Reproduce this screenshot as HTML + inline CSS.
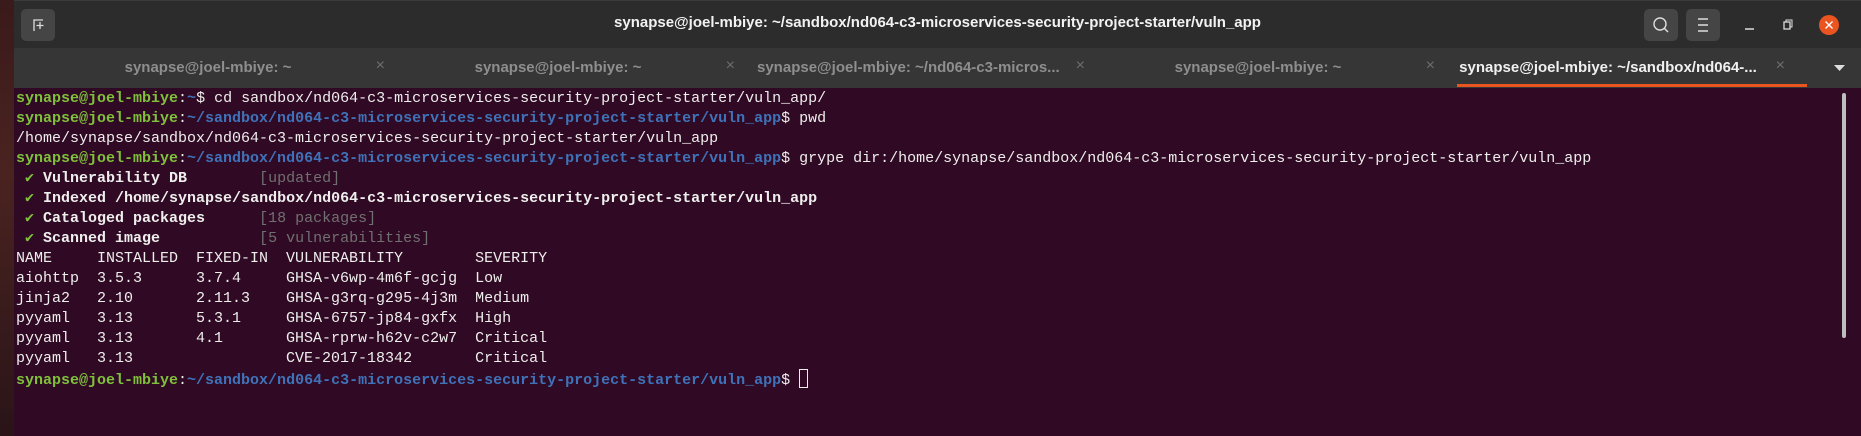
<!DOCTYPE html>
<html><head><meta charset="utf-8"><style>
*{margin:0;padding:0;box-sizing:border-box}
body{width:1861px;height:436px;overflow:hidden;background:#300a24;position:relative;font-family:"Liberation Sans",sans-serif}
#strip{position:absolute;left:0;top:0;width:14px;height:436px;background:linear-gradient(#3a1a1a,#4a2320 40%,#2a1418)}
#title{position:absolute;left:14px;top:0;right:0;height:48px;background:#2c2c2c;border-top:1px solid #3a3a3a}
#title .t{position:absolute;left:0;right:0;top:13px;text-align:center;color:#f2f2f2;font-weight:bold;font-size:15px}
.btn{position:absolute;top:8px;width:34px;height:32px;background:#454545;border-radius:5px}
#tabs{position:absolute;left:14px;top:48px;right:0;height:40px;background:#363636}
.tab{position:absolute;top:0;height:40px;width:350px;color:#8e8e8e;font-size:15px;font-weight:bold;white-space:nowrap}
.tab span{position:absolute;left:0;right:48px;top:11px;text-align:center}
.tab i{position:absolute;right:22px;top:9px;font-style:normal;font-weight:normal;color:#6e6e6e;font-size:16px}
.tab.act{color:#f0f0f0}
.tab.act:after{content:"";position:absolute;left:0;right:0;bottom:1px;height:3px;background:#e95420}
#term{position:absolute;left:16px;top:89px;font-family:"Liberation Mono",monospace;font-size:15px;line-height:20px;color:#eeeeec;white-space:pre}
.g{color:#7fc13a;font-weight:bold}.b{color:#3f72b8;font-weight:bold}.d{color:#707070}.w{font-weight:bold}
.c{display:inline-block;width:9px;color:#7fc13a;font-weight:bold}
#sb{position:absolute;left:1842px;top:93px;width:4px;height:245px;background:#bdbdbd;border-radius:2px}
</style></head><body>
<div id="strip"></div>
<div id="title">
<div class="btn" style="left:7px"><svg width="34" height="32"><path d="M13 22V11h9" stroke="#ddd" fill="none" stroke-width="1.3"/><path d="M19 13v7M15.5 16.5h7" stroke="#ddd" stroke-width="1.3"/></svg></div>
<div class="t">synapse@joel-mbiye: ~/sandbox/nd064-c3-microservices-security-project-starter/vuln_app</div>
<div class="btn" style="left:1630px"><svg width="34" height="32"><circle cx="16" cy="15" r="6" stroke="#ddd" fill="none" stroke-width="1.4"/><path d="M20 19l4 4" stroke="#ddd" stroke-width="1.5"/></svg></div>
<div class="btn" style="left:1672px"><svg width="34" height="32"><path d="M12 10h10M12 16h10M12 22h10" stroke="#ddd" stroke-width="1.4"/></svg></div>
<svg style="position:absolute;left:1726px;top:14px" width="20" height="20"><path d="M5 14h9" stroke="#ddd" stroke-width="1.5"/></svg>
<svg style="position:absolute;left:1764px;top:14px" width="20" height="20"><rect x="6" y="7" width="6" height="7" stroke="#ddd" fill="none" stroke-width="1.3"/><path d="M8 7V5h6v7h-2" stroke="#ddd" fill="none" stroke-width="1"/></svg>
<svg style="position:absolute;left:1804px;top:13px" width="22" height="22"><circle cx="11" cy="11" r="10" fill="#e95420"/><path d="M7.5 7.5l7 7M14.5 7.5l-7 7" stroke="#fff" stroke-width="1.4"/></svg>
</div>
<div id="tabs">
<div class="tab" style="left:43px"><span>synapse@joel-mbiye: ~</span><i>×</i></div>
<div class="tab" style="left:393px"><span>synapse@joel-mbiye: ~</span><i>×</i></div>
<div class="tab" style="left:743px"><span>synapse@joel-mbiye: ~/nd064-c3-micros...</span><i>×</i></div>
<div class="tab" style="left:1093px"><span>synapse@joel-mbiye: ~</span><i>×</i></div>
<div class="tab act" style="left:1443px"><span>synapse@joel-mbiye: ~/sandbox/nd064-...</span><i>×</i></div>
<svg style="position:absolute;left:1819px;top:14px" width="14" height="12"><path d="M1 3h11l-5.5 6z" fill="#ddd"/></svg>
</div>
<div id="sb"></div>
<div id="term"><span class="g">synapse@joel-mbiye</span>:<span class="b">~</span>$ cd sandbox/nd064-c3-microservices-security-project-starter/vuln_app/
<span class="g">synapse@joel-mbiye</span>:<span class="b">~/sandbox/nd064-c3-microservices-security-project-starter/vuln_app</span>$ pwd
/home/synapse/sandbox/nd064-c3-microservices-security-project-starter/vuln_app
<span class="g">synapse@joel-mbiye</span>:<span class="b">~/sandbox/nd064-c3-microservices-security-project-starter/vuln_app</span>$ grype dir:/home/synapse/sandbox/nd064-c3-microservices-security-project-starter/vuln_app
 <span class="c">✔</span> <span class="w">Vulnerability DB</span>        <span class="d">[updated]</span>
 <span class="c">✔</span> <span class="w">Indexed /home/synapse/sandbox/nd064-c3-microservices-security-project-starter/vuln_app</span>
 <span class="c">✔</span> <span class="w">Cataloged packages</span>      <span class="d">[18 packages]</span>
 <span class="c">✔</span> <span class="w">Scanned image</span>           <span class="d">[5 vulnerabilities]</span>
NAME     INSTALLED  FIXED-IN  VULNERABILITY        SEVERITY
aiohttp  3.5.3      3.7.4     GHSA-v6wp-4m6f-gcjg  Low
jinja2   2.10       2.11.3    GHSA-g3rq-g295-4j3m  Medium
pyyaml   3.13       5.3.1     GHSA-6757-jp84-gxfx  High
pyyaml   3.13       4.1       GHSA-rprw-h62v-c2w7  Critical
pyyaml   3.13                 CVE-2017-18342       Critical
<span class="g">synapse@joel-mbiye</span>:<span class="b">~/sandbox/nd064-c3-microservices-security-project-starter/vuln_app</span>$ <span style="display:inline-block;width:9px;height:19px;border:1px solid #eee;vertical-align:-4px"></span></div>
</body></html>
